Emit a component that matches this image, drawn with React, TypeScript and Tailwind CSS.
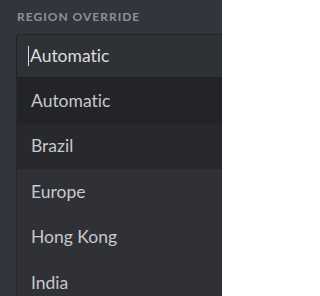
import React from "react";

const options = ["Automatic", "Brazil", "Europe", "Hong Kong", "India"];

export default function App() {
  return (
    <div
      className="w-[222px] h-[296px] overflow-hidden bg-[#32353b] pt-[9px] pl-4 [font-variant-ligatures:none]"
      style={{ fontFamily: "Lato, 'Noto Sans', sans-serif" }}
    >
      <div className="text-[12px] leading-4 font-bold tracking-[1px] text-[#8e9297] pl-px">
        REGION OVERRIDE
      </div>
      <div className="w-[260px] mt-[9px]">
        <div className="h-[44px] bg-[#2e3136] border border-[#202225] rounded-tl-[3px] flex items-center pl-[11px]">
          <span className="w-px h-[20px] bg-[#dcddde] mr-px" />
          <span className="text-[17.5px] text-[#dcddde]">Automatic</span>
        </div>
        <div className="border-l border-[#26282c]">
          {options.map((o, i) => (
            <div
              key={o}
              className={
                "h-[45.5px] flex items-center pl-[14px] text-[17.5px] text-[#c7c9cc] " +
                (i === 0 ? "bg-[#232428]" : i === 1 ? "bg-[#28292e]" : "bg-[#2f3136]")
              }
            >
              {o}
            </div>
          ))}
        </div>
      </div>
    </div>
  );
}
